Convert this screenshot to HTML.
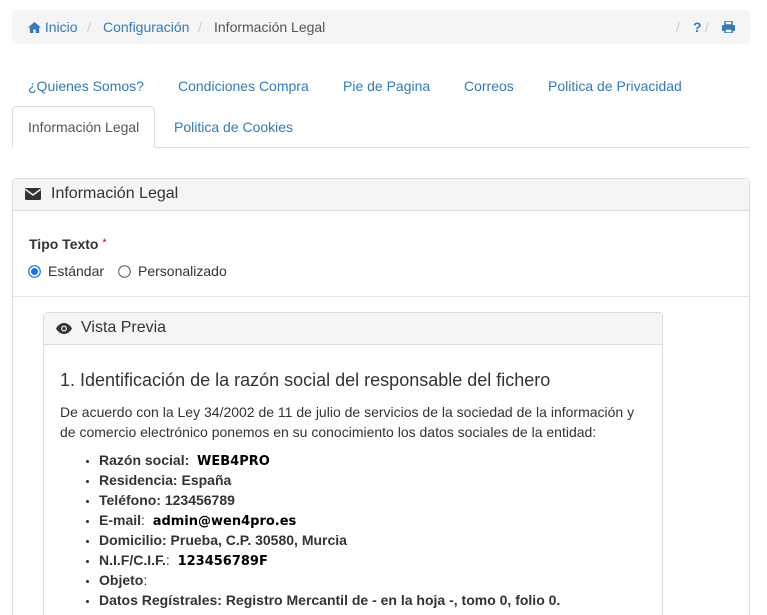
<!DOCTYPE html>
<html><head><meta charset="utf-8"><style>
*{box-sizing:border-box;margin:0;padding:0}
html,body{width:767px;height:615px;overflow:hidden}
body{background:#fff;font-family:"Liberation Sans",sans-serif;font-size:14px;color:#333;position:relative}
.a{position:absolute;white-space:nowrap}
.l{color:#337ab7}
.bc{left:12px;top:10px;width:738px;height:34px;background:#f5f5f5;border-radius:4px}
.sep{color:#ccc}
.tabline{left:12px;top:147px;width:738px;height:1px;background:#ddd}
.act{left:12px;top:106px;width:143px;height:42px;border:1px solid #ddd;border-bottom:1px solid #fff;border-radius:4px 4px 0 0;background:#fff}
.p1{left:12px;top:178px;width:738px;height:437px;border:1px solid #ddd;border-bottom:none;border-radius:4px 4px 0 0}
.p1h{left:13px;top:179px;width:736px;height:32px;background:#f5f5f5;border-bottom:1px solid #ddd}
.div{left:13px;top:296px;width:736px;height:1px;background:#e5e5e5}
.p2{left:43px;top:312px;width:620px;height:303px;border:1px solid #ddd;border-bottom:none;border-radius:4px 4px 0 0}
.p2h{left:44px;top:313px;width:618px;height:32px;background:#f5f5f5;border-bottom:1px solid #ddd}
ul{position:absolute;left:99px;top:450px;list-style:disc;font-weight:bold;font-size:14px}
ul li{height:20px;line-height:20px}
ul li::marker{font-size:11px}
.k{font-family:"DejaVu Sans",sans-serif;font-size:13px;font-weight:bold;color:#000;line-height:1}
.n{font-weight:normal}
</style></head><body>
<div class="a bc"></div>
<div class="a l" style="left:28px;top:19px"><svg width="13" height="11" viewBox="0 0 13 11" style="vertical-align:-1px"><path d="M6.5 0L0 5.5h1.8V11h3.5V7.5h2.4V11h3.5V5.5H13z" fill="#337ab7"/></svg> Inicio</div>
<div class="a sep" style="left:87px;top:19px">/</div>
<div class="a l" style="left:103px;top:19px">Configuración</div>
<div class="a sep" style="left:198px;top:19px">/</div>
<div class="a" style="left:214px;top:19px;color:#555">Información Legal</div>
<div class="a sep" style="left:676px;top:19px">/</div>
<div class="a l" style="left:693px;top:19px;font-weight:bold">?</div>
<div class="a sep" style="left:705px;top:19px">/</div>
<svg class="a" style="left:722px;top:21px" width="13" height="12" viewBox="0 0 13 12"><rect x="3" y="0" width="7" height="4" fill="none" stroke="#337ab7" stroke-width="1.5"/><rect x="0" y="4" width="13" height="6" rx="1" fill="#337ab7"/><rect x="3" y="8" width="7" height="4" fill="#fff" stroke="#337ab7" stroke-width="1.5"/></svg>

<div class="a l" style="left:28px;top:78px">¿Quienes Somos?</div>
<div class="a l" style="left:178px;top:78px">Condiciones Compra</div>
<div class="a l" style="left:343px;top:78px">Pie de Pagina</div>
<div class="a l" style="left:464px;top:78px">Correos</div>
<div class="a l" style="left:548px;top:78px">Politica de Privacidad</div>
<div class="a tabline"></div>
<div class="a act"></div>
<div class="a" style="left:28px;top:119px;color:#555">Información Legal</div>
<div class="a l" style="left:174px;top:119px">Politica de Cookies</div>

<div class="a p1"></div>
<div class="a p1h"></div>
<svg class="a" style="left:25px;top:188px" width="16" height="12" viewBox="0 0 16 12"><rect width="16" height="12" rx="1.5" fill="#333"/><path d="M0.5 1.5L8 7l7.5-5.5" fill="none" stroke="#f5f5f5" stroke-width="1.5"/></svg>
<div class="a" style="left:51px;top:185px;font-size:16px">Información Legal</div>
<div class="a" style="left:29px;top:236px;font-weight:bold">Tipo Texto <span style="color:#c00;font-weight:normal;font-size:11px;vertical-align:3px">*</span></div>
<svg class="a" style="left:28px;top:265px" width="13" height="13"><circle cx="6.5" cy="6.5" r="5.8" fill="#fff" stroke="#1a73e8" stroke-width="1.2"/><circle cx="6.5" cy="6.5" r="3.5" fill="#1a73e8"/></svg>
<div class="a" style="left:48px;top:263px">Estándar</div>
<svg class="a" style="left:118px;top:265px" width="13" height="13"><circle cx="6.5" cy="6.5" r="5.8" fill="#fff" stroke="#555" stroke-width="1"/></svg>
<div class="a" style="left:138px;top:263px">Personalizado</div>
<div class="a div"></div>

<div class="a p2"></div>
<div class="a p2h"></div>
<svg class="a" style="left:56px;top:323px" width="16" height="11" viewBox="0 0 16 11"><path d="M0 5.5C2 2 5 0 8 0s6 2 8 5.5C14 9 11 11 8 11S2 9 0 5.5z" fill="#333"/><circle cx="8" cy="5.5" r="3" fill="#f5f5f5"/><circle cx="8" cy="5.5" r="1.8" fill="#333"/></svg>
<div class="a" style="left:81px;top:319px;font-size:16px">Vista Previa</div>
<div class="a" style="left:60px;top:370px;font-size:18px">1. Identificación de la razón social del responsable del fichero</div>
<div class="a" style="left:60px;top:402px;line-height:20px">De acuerdo con la Ley 34/2002 de 11 de julio de servicios de la sociedad de la información y<br>de comercio electrónico ponemos en su conocimiento los datos sociales de la entidad:</div>
<ul>
<li>Razón social: &nbsp;<span class="k">WEB4PRO</span></li>
<li>Residencia: España</li>
<li>Teléfono: 123456789</li>
<li>E-mail<span class="n">:</span> &nbsp;<span class="k">admin@wen4pro.es</span></li>
<li>Domicilio: Prueba, C.P. 30580, Murcia</li>
<li>N.I.F/C.I.F.<span class="n">:</span> &nbsp;<span class="k">123456789F</span></li>
<li>Objeto<span class="n">:</span></li>
<li>Datos Regístrales: Registro Mercantil de - en la hoja -, tomo 0, folio 0.</li>
</ul>
</body></html>
